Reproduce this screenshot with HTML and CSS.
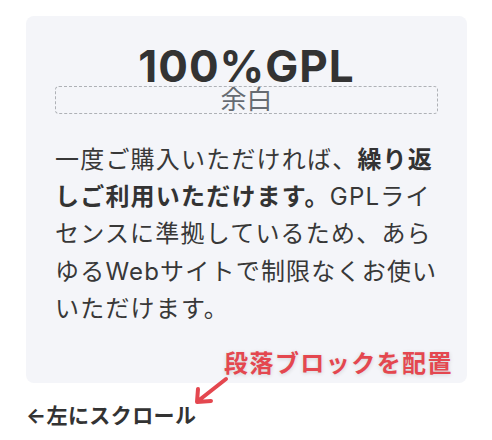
FILE: index.html
```html
<!DOCTYPE html>
<html lang="ja">
<head>
<meta charset="utf-8">
<link rel="stylesheet" href="styles.css">
</head>
<body>
<div class="page">
  <div class="card">
    <h1 class="title">100%GPL</h1>
    <div class="spacer">余白</div>
    <p class="text">一度ご購入いただければ、<strong>繰り返しご利用いただけます。</strong>GPLライセンスに準拠しているため、あらゆるWebサイトで制限なくお使いいただけます。</p>
    <div class="note">段落ブロックを配置</div>
    <svg class="arrow" width="44" height="36" viewBox="0 0 44 36">
      <path d="M36 7 L8 29 M8 17 L7 30 L21 29" fill="none" stroke="#e4474f" stroke-width="4" stroke-linecap="round" stroke-linejoin="round"/>
    </svg>
  </div>
  <div class="hint">←左にスクロール</div>
</div>
</body>
</html>
```
FILE: styles.css
```css
html, body {
  margin: 0;
  padding: 0;
  background: #ffffff;
}
body {
  font-family: "Inter", "Noto Sans CJK JP", sans-serif;
  color: #333333;
}
.page {
  padding: 16px 25px 0 26px;
}
.card {
  position: relative;
  background: #f4f5f9;
  border-radius: 8px;
  padding: 30px 29px 56px;
}
.title {
  margin: 0;
  font-size: 44px;
  line-height: 40px;
  letter-spacing: 1px;
  font-weight: 700;
  text-align: center;
  color: #333333;
}
.spacer {
  border: 1px dashed #aeb1b6;
  border-radius: 4px;
  height: 26px;
  line-height: 26px;
  font-size: 26px;
  text-align: center;
  color: #666b72;
}
.text {
  margin: 27px 0 0;
  font-size: 24px;
  line-height: 1.55;
  letter-spacing: 0.05em;
  color: #383838;
}
.text strong {
  font-weight: 700;
  color: #333333;
}
.note {
  position: absolute;
  right: 14px;
  bottom: 4px;
  font-size: 24px;
  line-height: 30px;
  letter-spacing: 0.06em;
  font-weight: 700;
  color: #e4474f;
  text-shadow: 0 1px 4px rgba(0, 0, 0, 0.15);
}
.arrow {
  position: absolute;
  left: 164px;
  top: 356px;
}
.hint {
  margin-top: 19px;
  font-size: 21px;
  line-height: 28px;
  letter-spacing: 0.02em;
  font-weight: 700;
  color: #333333;
}
```
